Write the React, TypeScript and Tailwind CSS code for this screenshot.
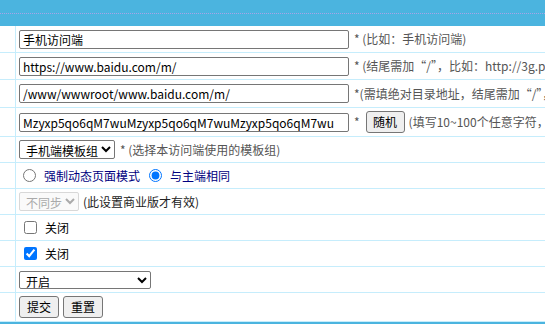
import React from "react";

const font = { fontFamily: '"Noto Sans CJK SC", "Noto Sans", sans-serif' };

function Row({ h, children }: { h: string; children: React.ReactNode }) {
  return (
    <div className={`flex border-b border-[#c6edfc] ${h}`}>
      <div className="w-[16px] shrink-0 border-r border-[#c6edfc]" />
      <div className="flex flex-1 min-w-0 items-center pl-[3px] whitespace-nowrap overflow-hidden">{children}</div>
    </div>
  );
}

const inputCls =
  "shrink-0 h-[19px] w-[330px] border border-[#767676] rounded-[2px] px-[3px] text-[12px] text-black bg-white outline-none";

export default function App() {
  return (
    <div className="w-[545px] h-[324px] bg-white overflow-hidden text-[12px] text-black" style={font}>
      <div className="h-[26px] bg-[#4bb4df] flex items-center">
        <div className="w-full border-t border-dotted border-[#a8a3e8] mt-[1px]" />
      </div>
      <Row h="h-[27px]">
        <input className={inputCls} defaultValue="手机访问端" />
        <span className="ml-[5px] shrink-0 text-[#555]">* (比如：手机访问端)</span>
      </Row>
      <Row h="h-[27px]">
        <input className={inputCls} defaultValue="https://www.baidu.com/m/" />
        <span className="ml-[5px] shrink-0 text-[#555]">* (结尾需加“/”，比如：http://3g.phpcms.cn/)</span>
      </Row>
      <Row h="h-[28px]">
        <input className={inputCls} defaultValue="/www/wwwroot/www.baidu.com/m/" />
        <span className="ml-[5px] shrink-0 text-[#555]">*(需填绝对目录地址，结尾需加“/”，比如：/www/)</span>
      </Row>
      <Row h="h-[29px]">
        <input className={inputCls} defaultValue="Mzyxp5qo6qM7wuMzyxp5qo6qM7wuMzyxp5qo6qM7wu" />
        <span className="ml-[5px] shrink-0 text-[#555]">*</span>
        <button className="shrink-0 ml-[6px] h-[22px] w-[39px] border border-[#767676] rounded-[3px] bg-[#efefef] text-[12px] text-black">
          随机
        </button>
        <span className="ml-[4px] shrink-0 text-[#555]">(填写10~100个任意字符，用来加密)</span>
      </Row>
      <Row h="h-[26px]">
        <select className="shrink-0 h-[19px] w-[96px] border border-[#767676] rounded-[2px] bg-white text-[12px] text-black pl-[2px]">
          <option>手机端模板组</option>
        </select>
        <span className="ml-[5px] shrink-0 text-[#555]">* (选择本访问端使用的模板组)</span>
      </Row>
      <Row h="h-[26px]">
        <label className="flex items-center ml-[2px]">
          <input type="radio" name="m" className="m-0 w-[13px] h-[13px] ml-[2px]" />
          <span className="ml-[8px] text-[#000080]">强制动态页面模式</span>
        </label>
        <label className="flex items-center ml-[9px]">
          <input type="radio" name="m" defaultChecked className="m-0 w-[13px] h-[13px]" />
          <span className="ml-[8px] text-[#000080]">与主端相同</span>
        </label>
      </Row>
      <Row h="h-[26px]">
        <select
          disabled
          className="shrink-0 h-[19px] w-[60px] border border-[#d8d8d8] rounded-[2px] bg-[#fafafa] text-[12px] text-[#aaa] pl-[2px]"
        >
          <option>不同步</option>
        </select>
        <span className="ml-[4px] text-[#222]">(此设置商业版才有效)</span>
      </Row>
      <Row h="h-[26px]">
        <label className="flex items-center">
          <input type="checkbox" className="m-0 ml-[5px] w-[13px] h-[13px]" />
          <span className="ml-[8px]">关闭</span>
        </label>
      </Row>
      <Row h="h-[26px]">
        <label className="flex items-center">
          <input type="checkbox" defaultChecked className="m-0 ml-[5px] w-[13px] h-[13px]" />
          <span className="ml-[8px]">关闭</span>
        </label>
      </Row>
      <Row h="h-[26px]">
        <select className="shrink-0 h-[18px] w-[132px] border border-[#767676] rounded-[2px] bg-white text-[12px] text-black pl-[2px]">
          <option>开启</option>
        </select>
      </Row>
      <Row h="h-[29px]">
        <button className="shrink-0 h-[22px] w-[40px] border border-[#767676] rounded-[3px] bg-[#efefef] text-[12px] text-black">
          提交
        </button>
        <button className="shrink-0 ml-[4px] h-[22px] w-[40px] border border-[#767676] rounded-[3px] bg-[#efefef] text-[12px] text-black">
          重置
        </button>
      </Row>
      <div className="h-[2px] bg-[#4bb4df]" />
    </div>
  );
}
